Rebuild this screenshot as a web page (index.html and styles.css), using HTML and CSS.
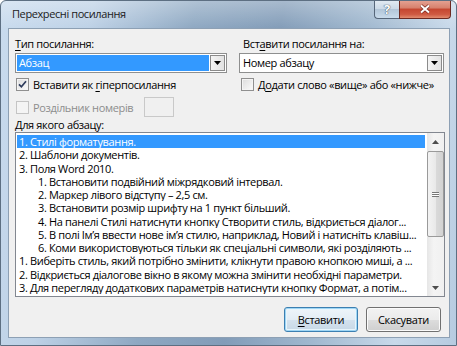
FILE: index.html
```html
<!DOCTYPE html>
<html lang="uk">
  <head>
    <meta charset="UTF-8" />
    <title>Перехресні посилання</title>
    <link rel="stylesheet" href="styles.css">
  </head>
  <body>
    <div class="window">
      <!-- Glass title bar -->
      <div class="titlebar">
        <span class="title">Перехресні посилання</span>
        <div class="caption-buttons">
          <span class="btn-help">?</span>
          <span class="btn-close">
            <svg width="12" height="10" viewBox="0 0 12 10">
              <path d="M2 1.5L10 8.5M10 1.5L2 8.5" stroke="#7a2a20" stroke-width="3.4" />
              <path d="M2 1.5L10 8.5M10 1.5L2 8.5" stroke="#fff" stroke-width="2" />
            </svg>
          </span>
        </div>
      </div>

      <div class="client">
        <div class="top-grid">
          <div class="col">
            <div class="label"><u>Т</u>ип посилання:</div>
            <div class="combo">
              <span class="combo-text selected">Абзац</span>
              <span class="combo-btn">
                <svg width="7" height="4" viewBox="0 0 7 4"><path d="M0 0h7L3.5 4z" fill="#000" /></svg>
              </span>
            </div>
            <div class="check-row">
              <span class="checkbox">
                <svg width="9" height="9" viewBox="0 0 9 9"><path d="M1 4.3L3.4 6.8L8 1.3" fill="none" stroke="#2d3b5c" stroke-width="1.7" /></svg>
              </span>
              <span>Вставити як <u>г</u>іперпосилання</span>
            </div>
            <div class="check-row sep-row disabled">
              <span class="checkbox"></span>
              <span>Роздільник номерів</span>
              <span class="sep-input"></span>
            </div>
          </div>

          <div class="col">
            <div class="label right-label">Вст<u>а</u>вити посилання на:</div>
            <div class="combo">
              <span class="combo-text">Номер абзацу</span>
              <span class="combo-btn">
                <svg width="7" height="4" viewBox="0 0 7 4"><path d="M0 0h7L3.5 4z" fill="#000" /></svg>
              </span>
            </div>
            <div class="check-row right-check">
              <span class="checkbox"></span>
              <span>Д<u>о</u>дати слово «вище» або «нижче»</span>
            </div>
          </div>
        </div>

        <div class="label">Для якого абзацу:</div>
        <div class="listbox">
          <div class="list-items">
            <div class="item selected">1. Стилі форматування.</div>
            <div class="item">2. Шаблони документів.</div>
            <div class="item">3. Поля Word 2010.</div>
            <div class="item sub">1. Встановити подвійний міжрядковий інтервал.</div>
            <div class="item sub">2. Маркер лівого відступу – 2,5 см.</div>
            <div class="item sub">3. Встановити розмір шрифту на 1 пункт більший.</div>
            <div class="item sub">4. На панелі Стилі натиснути кнопку Створити стиль, відкриється діалог...</div>
            <div class="item sub">5. В полі Ім’я ввести нове ім’я стилю, наприклад, Новий і натисніть клавіш...</div>
            <div class="item sub">6. Коми використовуються тільки як спеціальні символи, які розділяють ...</div>
            <div class="item">1. Виберіть стиль, який потрібно змінити, клікнути правою кнопкою миші, а ...</div>
            <div class="item">2. Відкриється діалогове вікно в якому можна змінити необхідні параметри.</div>
            <div class="item">3. Для перегляду додаткових параметрів натиснути кнопку Формат, а потім...</div>
          </div>
          <div class="scrollbar">
            <span class="sb-btn">
              <svg width="7" height="4" viewBox="0 0 7 4"><path d="M0 4h7L3.5 0z" fill="#4d4d4d" /></svg>
            </span>
            <span class="sb-thumb"><span class="grip"></span></span>
            <span class="sb-space"></span>
            <span class="sb-btn">
              <svg width="7" height="4" viewBox="0 0 7 4"><path d="M0 0h7L3.5 4z" fill="#4d4d4d" /></svg>
            </span>
          </div>
        </div>

        <div class="buttons">
          <button class="btn default"><u>В</u>ставити</button>
          <button class="btn">Скасувати</button>
        </div>
      </div>
    </div>
  </body>
</html>
```

FILE: styles.css
```css
body {
  margin: 0;
  font-family: "Open Sans", "Noto Sans", sans-serif;
  font-size: 11px;
  letter-spacing: -0.35px;
  color: #000;
}
u {
  text-decoration-thickness: 1px;
  text-underline-offset: 2px;
}

/* Window frame */
.window {
  width: 457px;
  height: 346px;
  box-sizing: border-box;
  border: 1px solid #5d6f82;
  border-radius: 6px 6px 0 0;
  display: flex;
  flex-direction: column;
  overflow: hidden;
  background:
    linear-gradient(to bottom, rgba(255, 255, 255, 0.3), rgba(255, 255, 255, 0) 28px),
    linear-gradient(100deg, #c9dbee 0%, #bdd1e6 18%, #8ea8c2 38%, #829cb8 55%, #a0b8cf 72%, #c8d9ea 88%, #b6cbe0 100%);
}
.titlebar {
  height: 27px;
  display: flex;
  align-items: flex-start;
}
.title {
  padding: 6px 0 0 11px;
  font-size: 11px;
  letter-spacing: -0.4px;
  line-height: 14px;
  color: #1b1b1b;
}
.caption-buttons {
  margin-left: auto;
  margin-right: 5px;
  margin-top: -1px;
  display: flex;
}
.btn-help {
  width: 24px;
  height: 18px;
  border: 1px solid #56667a;
  border-top: none;
  border-right: none;
  border-radius: 0 0 0 4px;
  background: linear-gradient(#e3ebf3 0%, #cbd9e7 50%, #b2c5d8 51%, #c9dbec 100%);
  color: #fff;
  font-size: 13px;
  font-weight: bold;
  line-height: 18px;
  text-align: center;
  text-shadow: 0 0 1px #33455a, 0 0 1px #33455a;
}
.btn-close {
  width: 50px;
  height: 18px;
  border: 1px solid #6d2a22;
  border-top: none;
  border-radius: 0 0 4px 0;
  background: linear-gradient(#e6a596 0%, #d7806c 45%, #c54630 50%, #cf5a42 80%, #e28c6f 100%);
  display: flex;
  align-items: center;
  justify-content: center;
}

/* Client area */
.client {
  flex: 1;
  margin: 0 6px 7px 7px;
  background: #f0f0f0;
  border: 1px solid #8da0b4;
  padding: 7px 5px 2px 6px;
  display: flex;
  flex-direction: column;
}
.top-grid {
  display: grid;
  grid-template-columns: 212px 205px;
  column-gap: 12px;
}
.col {
  display: flex;
  flex-direction: column;
}
.label {
  line-height: 15px;
  height: 15px;
  white-space: nowrap;
}
.right-label {
  padding-left: 4px;
}
.combo {
  margin-top: 2px;
  height: 20px;
  box-sizing: border-box;
  border: 1px solid #8e8f8f;
  background: #fff;
  padding: 1px;
  display: flex;
}
.combo-text {
  flex: 1;
  padding-left: 2px;
  line-height: 16px;
}
.combo-text.selected {
  background: #3399ff;
  color: #fff;
}
.combo-btn {
  width: 15px;
  margin-left: 1px;
  box-sizing: border-box;
  border: 1px solid #8b8b8b;
  background: linear-gradient(to right, #f4f4f4, #e2e2e2);
  display: flex;
  align-items: center;
  justify-content: center;
}
.check-row {
  margin-top: 5px;
  height: 13px;
  display: flex;
  align-items: center;
  gap: 4px;
  padding-left: 1px;
  line-height: 13px;
  white-space: nowrap;
}
.right-check {
  padding-left: 2px;
}
.checkbox {
  width: 13px;
  height: 13px;
  box-sizing: border-box;
  border: 1px solid #8f8f8f;
  background: linear-gradient(135deg, #dcdcdc, #fbfbfb);
  box-shadow: inset 0 0 0 1px #f4f4f4;
  display: flex;
  align-items: center;
  justify-content: center;
  flex-shrink: 0;
}
.sep-row {
  margin-top: 6px;
  height: 20px;
  width: 158px;
}
.disabled {
  color: #8d8d8d;
}
.disabled .checkbox {
  border-color: #c4c4c4;
  background: #f4f4f4;
}
.sep-input {
  margin-left: auto;
  width: 30px;
  height: 20px;
  box-sizing: border-box;
  border: 1px solid #c9c9c9;
  background: #f0f0f0;
}

/* List box */
.listbox {
  width: 430px;
  height: 165px;
  box-sizing: border-box;
  border: 1px solid #828790;
  background: #fff;
  display: flex;
}
.list-items {
  width: 408px;
  padding: 2px 0 0 1px;
}
.item {
  height: 13.27px;
  line-height: 13.27px;
  padding-left: 2px;
  white-space: nowrap;
  overflow: hidden;
}
.item.sub {
  padding-left: 21px;
}
.item.selected {
  background: #3399ff;
  color: #fff;
}
.scrollbar {
  width: 17px;
  margin-left: 2px;
  display: flex;
  flex-direction: column;
  background: linear-gradient(to right, #e6e6e6, #f4f4f4 40%, #f0f0f0);
}
.sb-btn {
  height: 17px;
  display: flex;
  align-items: center;
  justify-content: center;
}
.sb-thumb {
  margin-top: 1px;
  height: 86px;
  box-sizing: border-box;
  border: 1px solid #9a9a9a;
  border-radius: 2px;
  background: linear-gradient(to right, #f3f3f3, #e9e9e9 50%, #dadada 51%, #d2d2d2);
  display: flex;
  align-items: center;
  justify-content: center;
}
.grip {
  width: 7px;
  height: 5px;
  background: repeating-linear-gradient(to bottom, #777 0, #777 1px, #fdfdfd 1px, #fdfdfd 2px);
}
.sb-space {
  flex: 1;
}

/* Dialog buttons */
.buttons {
  margin-top: 10px;
  margin-right: 3px;
  display: flex;
  justify-content: flex-end;
  gap: 8px;
}
.btn {
  width: 75px;
  height: 25px;
  border: 1px solid #707070;
  border-radius: 3px;
  background: linear-gradient(#f2f2f2 0%, #ebebeb 50%, #dddddd 51%, #cfcfcf 100%);
  box-shadow: inset 0 0 0 1px #fbfbfb;
  font-family: inherit;
  font-size: 11px;
  letter-spacing: -0.35px;
  color: #000;
  padding: 0;
}
.btn.default {
  width: 74px;
  border-color: #3c7fb1;
  box-shadow: inset 0 0 0 1px #9fd6f5, inset 0 0 0 2px #e8f5fc;
  background: linear-gradient(#eef5fa 0%, #e3edf5 50%, #d4e2ee 51%, #c7d8e6 100%);
}
```
